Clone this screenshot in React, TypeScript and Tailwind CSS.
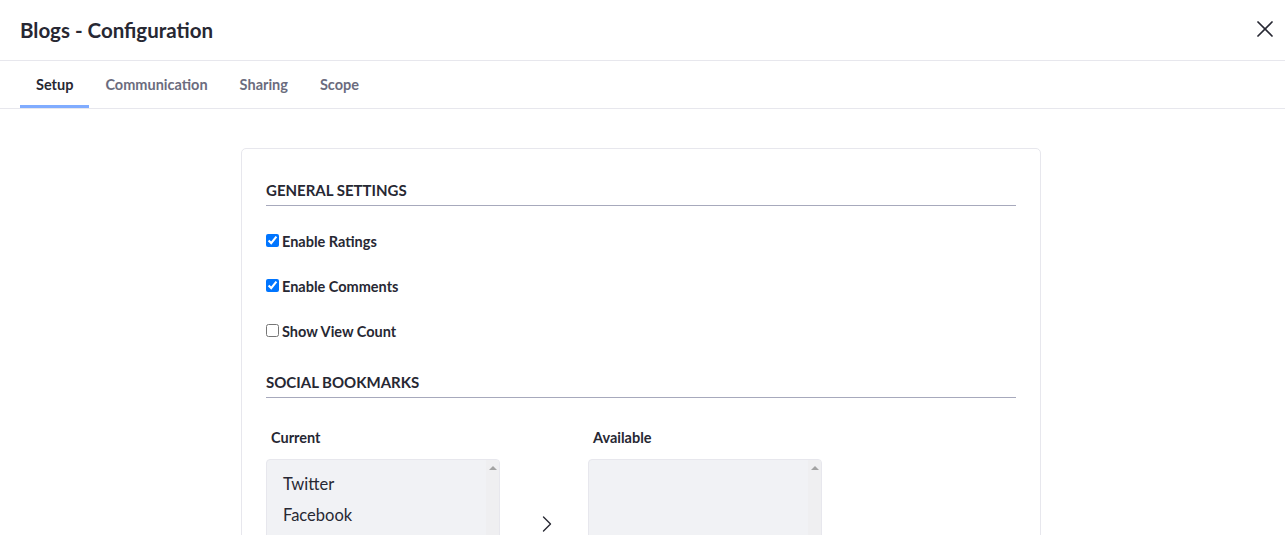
import { X, ChevronRight } from 'lucide-react'

const TABS = ['Setup', 'Communication', 'Sharing', 'Scope']

const OPTIONS = [
  { label: 'Enable Ratings', checked: true },
  { label: 'Enable Comments', checked: true },
  { label: 'Show View Count', checked: false },
]

function SectionTitle({ children }: { children: string }) {
  return (
    <div className="text-[15px] leading-[20px] font-bold uppercase text-[#272833] pt-[7px] pb-[5px] border-b border-[#a7a9bc]">
      {children}
    </div>
  )
}

function ListBox({ items }: { items: string[] }) {
  return (
    <div className="flex h-[120px] border border-[#e7e7ed] rounded-[4px] bg-[#f1f2f5] overflow-hidden">
      <div className="flex-1 pt-[9px]">
        {items.map(it => (
          <div key={it} className="h-[31px] flex items-center px-[16px] text-[16.5px] text-[#272833]">
            {it}
          </div>
        ))}
      </div>
      <div className="w-[13px] bg-[#efeff1] flex justify-center pt-[6px]">
        <div className="w-0 h-0 border-l-[4px] border-r-[4px] border-b-[4px] border-l-transparent border-r-transparent border-b-[#a3a3a3]" />
      </div>
    </div>
  )
}

export default function App() {
  return (
    <div className="w-[1285px] h-[535px] overflow-hidden bg-white" style={{ fontFamily: 'Lato, "Open Sans", sans-serif' }}>
      {/* Header */}
      <div className="h-[61px] flex items-center justify-between pl-[20px] pr-[6px] border-b border-[#e7e7ed]">
        <h1 className="text-[20.5px] font-bold text-[#272833]">Blogs - Configuration</h1>
        <X size={28} strokeWidth={1.5} className="text-[#272833] mt-[-2px]" />
      </div>

      {/* Tabs */}
      <div className="h-[48px] flex px-[20px] border-b border-[#e7e7ed]">
        {TABS.map((t, i) => (
          <div key={t}
            className={`px-[16px] flex items-center text-[14.5px] font-bold border-b-[3px] ${i === 0 ? 'border-[#80acff] text-[#272833]' : 'border-transparent text-[#6b6c7e]'}`}>
            <span className="pt-[3px]">{t}</span>
          </div>
        ))}
      </div>

      {/* Card */}
      <div className="pl-[241px] pt-[39px]">
        <div className="w-[800px] border border-[#e7e7ed] rounded-[5px] px-[24px] pt-[24px] pb-[40px]">
          <SectionTitle>General Settings</SectionTitle>
          <div className="mt-[13px]">
            {OPTIONS.map(o => (
              <label key={o.label} className="h-[45px] flex items-center gap-[3px] text-[14.5px] font-bold text-[#272833]">
                <input type="checkbox" defaultChecked={o.checked} className="w-[13px] h-[13px] m-0 mb-[2px]" />
                {o.label}
              </label>
            ))}
          </div>

          <div className="mt-[11px]">
            <SectionTitle>Social Bookmarks</SectionTitle>
          </div>

          <div className="flex mt-[30px]">
            <div className="w-[234px]">
              <div className="pl-[5px] text-[14.5px] leading-[20px] font-bold text-[#272833]">Current</div>
              <div className="mt-[11px]">
                <ListBox items={['Twitter', 'Facebook']} />
              </div>
            </div>
            <div className="w-[88px] flex justify-center pl-[6px] pt-[82px]">
              <ChevronRight size={28} strokeWidth={1.2} className="text-[#272833]" />
            </div>
            <div className="w-[234px]">
              <div className="pl-[5px] text-[14.5px] leading-[20px] font-bold text-[#272833]">Available</div>
              <div className="mt-[11px]">
                <ListBox items={[]} />
              </div>
            </div>
          </div>
        </div>
      </div>
    </div>
  )
}
